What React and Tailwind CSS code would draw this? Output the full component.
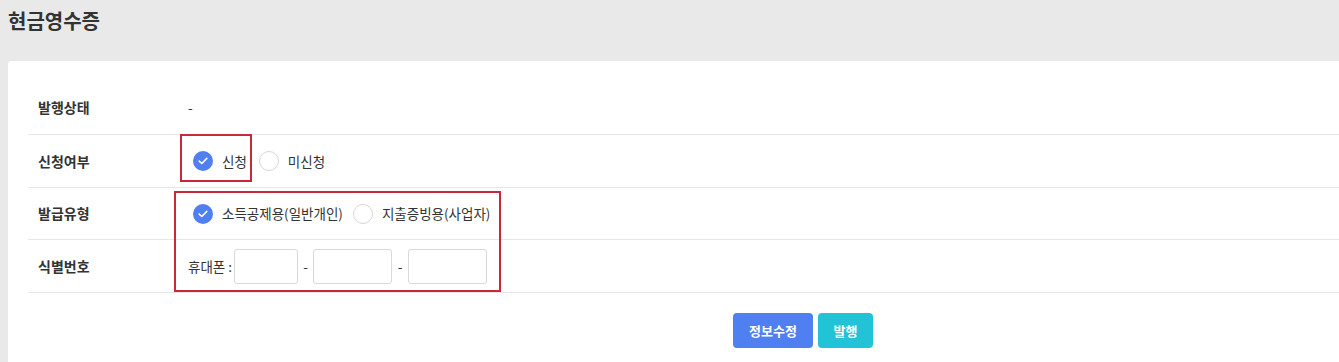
import React, { useState } from 'react'

const font = { fontFamily: '"Noto Sans CJK KR", "Noto Sans", sans-serif' }

const Radio = ({ checked, label, onClick }) => (
  <label onClick={onClick} className="flex items-center cursor-pointer">
    {checked ? (
      <span className="w-5 h-5 rounded-full bg-[#4f7ff0] flex items-center justify-center">
        <svg width="10" height="8" viewBox="0 0 10 8" fill="none">
          <path d="M1.2 4.1 3.8 6.5 8.8 1.4" stroke="#fff" strokeWidth="1.6" strokeLinecap="round" strokeLinejoin="round" />
        </svg>
      </span>
    ) : (
      <span className="w-5 h-5 rounded-full border border-[#d6d6d6] bg-white" />
    )}
    <span className="ml-[9px] text-[13.5px] text-[#333]">{label}</span>
  </label>
)

const Row = ({ label, children }) => (
  <div className="flex items-center border-b border-[#e6e6e6]">
    <div className="w-[160px] pl-[10px] text-[14px] font-bold text-[#333]">{label}</div>
    <div className="flex-1 flex items-center">{children}</div>
  </div>
)

const App = () => {
  const [apply, setApply] = useState(true)
  const [type, setType] = useState('personal')

  return (
    <div style={font} className="w-[1339px] h-[362px] overflow-hidden bg-[#e9e9e9]">
      <h1 className="pl-2 pt-[7px] h-[61px] text-[20px] font-bold text-[#333] leading-[28px]">현금영수증</h1>

      <div className="ml-2 w-[1590px] bg-white rounded-tl-[4px] pl-5 pr-5 pt-5 pb-10">
        <div className="relative">
          <Row label="발행상태">
            <div className="h-[53px] flex items-center text-[13.5px] text-[#333]">-</div>
          </Row>
          <Row label="신청여부">
            <div className="h-[52px] flex items-center gap-[12px] pl-[5px]">
              <Radio checked={apply} label="신청" onClick={() => setApply(true)} />
              <Radio checked={!apply} label="미신청" onClick={() => setApply(false)} />
            </div>
          </Row>
          <Row label="발급유형">
            <div className="h-[51px] flex items-center gap-[10px] pl-[5px]">
              <Radio checked={type === 'personal'} label="소득공제용(일반개인)" onClick={() => setType('personal')} />
              <Radio checked={type === 'business'} label="지출증빙용(사업자)" onClick={() => setType('business')} />
            </div>
          </Row>
          <Row label="식별번호">
            <div className="h-[52px] flex items-center text-[13.5px] text-[#333]">
              <span className="mr-[2px]">휴대폰 :</span>
              <input className="w-[64px] h-[35px] border border-[#d9d9d9] rounded-[3px] outline-none" />
              <span className="mx-[4px] w-[7px] text-center">-</span>
              <input className="w-[79px] h-[35px] border border-[#d9d9d9] rounded-[3px] outline-none" />
              <span className="mx-[4px] w-[8px] text-center">-</span>
              <input className="w-[79px] h-[35px] border border-[#d9d9d9] rounded-[3px] outline-none" />
            </div>
          </Row>

          {/* annotation boxes */}
          <div className="absolute left-[152px] top-[53px] w-[72px] h-[48px] border-2 border-[#c9283a] pointer-events-none" />
          <div className="absolute left-[146px] top-[110px] w-[327px] h-[101px] border-2 border-[#c9283a] pointer-events-none" />
        </div>

        <div className="flex justify-center gap-[5px] mt-5">
          <button className="w-[80px] h-[35px] rounded-[4px] bg-[#4f7ff0] text-white text-[13px] font-bold">정보수정</button>
          <button className="w-[55px] h-[35px] rounded-[4px] bg-[#22c3d6] text-white text-[13px] font-bold">발행</button>
        </div>
      </div>
    </div>
  )
}

export default App
